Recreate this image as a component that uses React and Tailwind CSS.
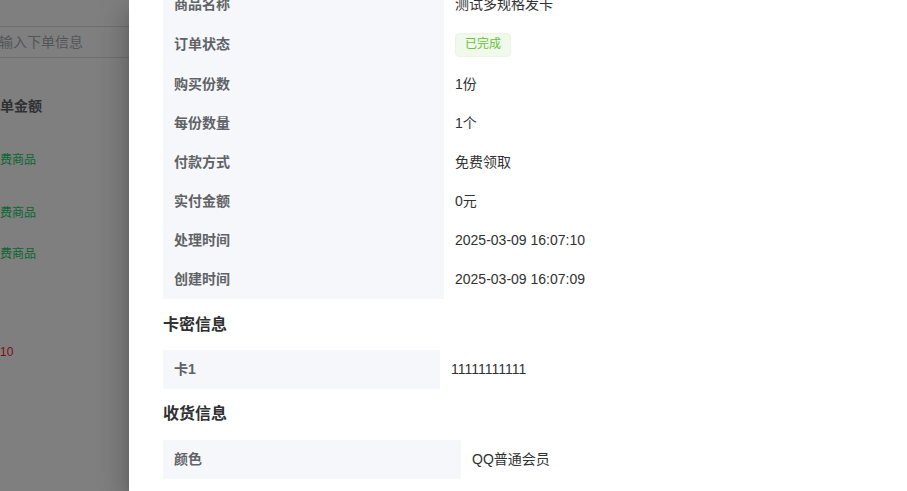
import React from 'react';

const orderRows = [
  { label: '商品名称', value: '测试多规格发卡' },
  { label: '订单状态', tag: '已完成' },
  { label: '购买份数', value: '1份' },
  { label: '每份数量', value: '1个' },
  { label: '付款方式', value: '免费领取' },
  { label: '实付金额', value: '0元' },
  { label: '处理时间', value: '2025-03-09 16:07:10' },
  { label: '创建时间', value: '2025-03-09 16:07:09' },
];

function InfoTable({ rows, labelWidth }) {
  return (
    <table className="border-collapse text-[14px]">
      <tbody>
        {rows.map((row) => (
          <tr key={row.label}>
            <td
              className={`${labelWidth} bg-[#f5f7fa] px-[11px] py-[8px] font-bold leading-[23px] text-[#606266] align-middle`}
            >
              {row.label}
            </td>
            <td className="px-[11px] py-[8px] leading-[23px] text-[#303133] align-middle">
              {row.tag ? (
                <span className="inline-flex h-[24px] items-center rounded-[4px] border border-[#eaf6e2] bg-[#f0f9eb] px-[9px] text-[12px] text-[#67c23a]">
                  {row.tag}
                </span>
              ) : (
                row.value
              )}
            </td>
          </tr>
        ))}
      </tbody>
    </table>
  );
}

export default function App() {
  return (
    <div className="relative h-[491px] w-[907px] overflow-hidden bg-white font-['Liberation_Sans','Noto_Sans_CJK_SC',sans-serif]">
      {/* page underneath the drawer */}
      <div className="flex flex-col pt-[26px]">
        <div className="-ml-[20px] flex h-[32px] w-[400px] items-center border border-[#dcdfe6] pl-[18px] text-[14px] text-[#a8abb2]">
          输入下单信息
        </div>
        <div className="-ml-[14px] mt-[38px] text-[14px] font-bold text-[#606266]">订单金额</div>
        <div className="-ml-[12px] mt-[34px] text-[12px] text-[#13ce66]">免费商品</div>
        <div className="-ml-[12px] mt-[35px] text-[12px] text-[#13ce66]">免费商品</div>
        <div className="-ml-[12px] mt-[23px] text-[12px] text-[#13ce66]">免费商品</div>
        <div className="-ml-[48px] mt-[80px] text-[12px] text-[#f5222d]">2025-03-10</div>
      </div>

      {/* mask */}
      <div className="absolute inset-0 bg-black/50" />

      {/* drawer */}
      <div className="absolute right-0 top-0 h-full w-[778px] bg-white shadow-[0_8px_10px_-5px_rgba(0,0,0,0.2),0_16px_24px_2px_rgba(0,0,0,0.14),0_6px_30px_5px_rgba(0,0,0,0.12)]">
        <div className="-mt-[15px] px-[34px]">
          <InfoTable rows={orderRows} labelWidth="w-[281px]" />

          <h3 className="mt-[14px] mb-[13px] text-[16px] font-bold leading-[24px] text-[#303133]">卡密信息</h3>
          <InfoTable rows={[{ label: '卡1', value: '11111111111' }]} labelWidth="w-[277px]" />

          <h3 className="mt-[13px] mb-[14px] text-[16px] font-bold leading-[24px] text-[#303133]">收货信息</h3>
          <InfoTable rows={[{ label: '颜色', value: 'QQ普通会员' }]} labelWidth="w-[298px]" />
        </div>
      </div>
    </div>
  );
}
